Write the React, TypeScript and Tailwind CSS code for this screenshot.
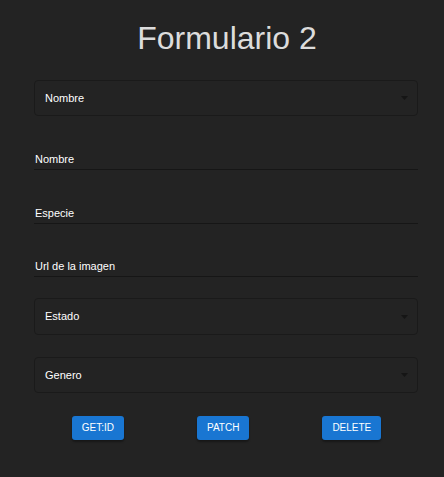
import React from 'react';

const font = { fontFamily: '"Liberation Sans", Arial, sans-serif' };

function SelectBox({ label, className }: { label: string; className?: string }) {
  return (
    <div
      className={
        'flex h-[36px] items-center justify-between rounded-[4px] border border-[#1a1a1a] pl-[10px] pr-[9px] ' +
        (className ?? '')
      }
    >
      <span className="text-[11px] leading-[13px] text-white">{label}</span>
      <svg width="7" height="4" viewBox="0 0 7 4">
        <path d="M0 0 L7 0 L3.5 4 Z" fill="#151515" />
      </svg>
    </div>
  );
}

function TextField({ label, className }: { label: string; className?: string }) {
  return (
    <div className={'border-b border-[#161616] pb-[3px] ' + (className ?? '')}>
      <span className="block pl-[1px] text-[11px] leading-[13px] text-white">{label}</span>
    </div>
  );
}

function ActionButton({ children }: { children: React.ReactNode }) {
  return (
    <button className="h-[24px] rounded-[3px] bg-[#1976d2] px-[10px] text-[10px] uppercase leading-[24px] text-white shadow-[0_2px_2px_rgba(0,0,0,0.35)]">
      {children}
    </button>
  );
}

export default function App() {
  return (
    <div className="min-h-[477px] w-full bg-[#232323] pt-[20px]" style={font}>
      <h1 className="text-center text-[32px] leading-[37px] text-[#dcdcdc] pl-[10px]">Formulario 2</h1>
      <div className="ml-[34px] w-[384px]">
        <SelectBox label="Nombre" className="mt-[23px]" />
        <TextField label="Nombre" className="mt-[37px]" />
        <TextField label="Especie" className="mt-[37px]" />
        <TextField label="Url de la imagen" className="mt-[36px]" />
        <SelectBox label="Estado" className="mt-[21px] h-[37px]" />
        <SelectBox label="Genero" className="mt-[22px]" />
        <div className="mt-[23px] flex justify-center gap-[73px] pl-[1px]">
          <ActionButton>GET:ID</ActionButton>
          <ActionButton>PATCH</ActionButton>
          <ActionButton>DELETE</ActionButton>
        </div>
      </div>
    </div>
  );
}
